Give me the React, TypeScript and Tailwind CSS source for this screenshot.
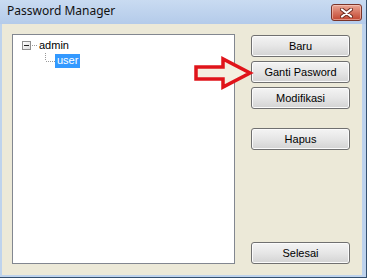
import React from "react";

const font = { fontFamily: '"Liberation Sans", Arial, sans-serif' };

function XpButton({ label, className = "" }: { label: string; className?: string }) {
  return (
    <button
      className={`flex h-[22px] w-[99px] items-center justify-center rounded-[3px] border border-[#707070] bg-gradient-to-b from-[#f4f4f4] via-[#e6e6e6] to-[#d3d3d3] text-[11px] text-black shadow-[inset_0_0_0_1px_#fbfbfb] ${className}`}
    >
      {label}
    </button>
  );
}

function Tree() {
  return (
    <div className="flex w-[223px] flex-col border border-[#828790] bg-white pt-[3px] text-[11px] text-black">
      <div className="flex h-[15px] items-center pl-[9px]">
        <div className="relative h-[9px] w-[9px] border border-[#8f8f8f] bg-gradient-to-br from-white to-[#dcdcdc]">
          <div className="absolute left-[1px] top-[3px] h-[1px] w-[5px] bg-[#222]" />
        </div>
        <svg width="6" height="1" className="ml-[1px]">
          <line x1="0" y1="0.5" x2="6" y2="0.5" stroke="#9a9a9a" strokeDasharray="1 1" />
        </svg>
        <span className="ml-[1px] leading-none">admin</span>
      </div>
      <div className="flex h-[15px] items-center pl-[32px]">
        <svg width="10" height="9" className="-mt-[7px]">
          <line x1="0.5" y1="0" x2="0.5" y2="8" stroke="#9a9a9a" strokeDasharray="1 1" />
          <line x1="1" y1="8.5" x2="10" y2="8.5" stroke="#9a9a9a" strokeDasharray="1 1" />
        </svg>
        <span className="flex h-[14px] items-center bg-[#3399ff] px-[2px] leading-none text-white">user</span>
      </div>
    </div>
  );
}

export default function App() {
  return (
    <div
      style={font}
      className="relative flex h-[278px] w-[367px] flex-col overflow-hidden border-b border-r border-[#34506e] bg-[#bed3ed]"
    >
      <div className="flex h-[24px] items-start bg-gradient-to-b from-[#c9dbf1] to-[#b4cbea] pl-[7px] pr-[4px]">
        <span
          className="mt-[5px] text-[12px] leading-none text-[#111]"
          style={{ fontFamily: '"Noto Sans", "Liberation Sans", sans-serif' }}
        >
          Password Manager
        </span>
        <div className="ml-auto mt-[4px] flex h-[17px] w-[31px] items-center justify-center rounded-[3px] border border-[#7a3328] bg-gradient-to-b from-[#e9a796] via-[#d6735f] to-[#c1452f] shadow-[inset_0_0_0_1px_rgba(255,220,210,0.5)]">
          <svg width="13" height="10" viewBox="0 0 13 10">
            <path d="M2 1.5 L11 8.5 M11 1.5 L2 8.5" stroke="#6e2c22" strokeWidth="4" strokeLinecap="round" />
            <path d="M2 1.5 L11 8.5 M11 1.5 L2 8.5" stroke="#ffffff" strokeWidth="2.2" strokeLinecap="round" />
          </svg>
        </div>
      </div>

      <div className="ml-[2px] mr-[4px] flex h-[251px] gap-[16px] bg-[#ece9d8] pb-[11px] pl-[10px] pr-[12px] pt-[10px]">
        <Tree />
        <div className="flex flex-col pt-[1px]">
          <XpButton label="Baru" />
          <XpButton label="Ganti Pasword" className="mt-[4px]" />
          <XpButton label="Modifikasi" className="mt-[4px]" />
          <XpButton label="Hapus" className="mt-[19px]" />
          <XpButton label="Selesai" className="mt-auto" />
        </div>
      </div>

      <svg width="64" height="36" viewBox="0 0 64 36" className="absolute left-[192px] top-[55px]">
        <path
          d="M4 12 L31 12 L31 4 L58 18 L31 32 L31 24 L4 24 Z"
          fill="#f4efe0"
          stroke="#e0141a"
          strokeWidth="3.5"
          strokeLinejoin="miter"
        />
      </svg>
    </div>
  );
}
